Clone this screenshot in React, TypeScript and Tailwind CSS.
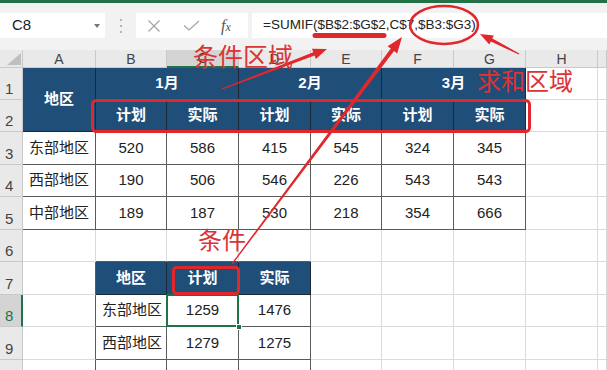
import React from "react"

const FONT = "font-['Liberation_Sans','Noto_Sans_CJK_SC',sans-serif]"

const HEAD = "bg-[#1f4e79] text-white font-bold border-r border-b border-[#1a2838] flex items-center justify-center text-[15px]"
const DATA = "border-r border-b border-[#5a5a5a] flex items-center justify-center text-[15px] text-[#222]"
const DATA_L = "border-r border-b border-[#5a5a5a] flex items-center justify-start pl-[6px] text-[15px] text-[#222]"
const BLANK = "border-r border-b border-[#dadada]"
const ROWHDR = "bg-[#e9e9e9] border-r border-b border-[#c9c9c9] flex items-end pl-[5px] pb-[3px] text-[15px] leading-none text-[#444]"
const COLHDR = "bg-[#e9e9e9] border-r border-b border-[#c9c9c9] flex items-center justify-center pt-px text-[14px] text-[#444]"

type Pt = [number, number]

// tapered red arrow, thin at the tail and thick near the head
function arrowPoints(x1: number, y1: number, x2: number, y2: number, w1: number, w2: number, hl: number, hw: number) {
    const dx = x2 - x1
    const dy = y2 - y1
    const len = Math.hypot(dx, dy)
    const ux = dx / len
    const uy = dy / len
    const nx = -uy
    const ny = ux
    const bx = x2 - ux * hl
    const by = y2 - uy * hl
    const pts: Pt[] = [
        [x1 + (nx * w1) / 2, y1 + (ny * w1) / 2],
        [bx + (nx * w2) / 2, by + (ny * w2) / 2],
        [bx + (nx * hw) / 2, by + (ny * hw) / 2],
        [x2, y2],
        [bx - (nx * hw) / 2, by - (ny * hw) / 2],
        [bx - (nx * w2) / 2, by - (ny * w2) / 2],
        [x1 - (nx * w1) / 2, y1 - (ny * w1) / 2],
    ]
    return pts.map(p => `${p[0].toFixed(1)},${p[1].toFixed(1)}`).join(" ")
}

function Annotations() {
    const red = "#e0282c"
    return (
        <>
            <svg className="absolute left-0 top-0 pointer-events-none" width={607} height={370}>
                {/* underline of the criteria range */}
                <line x1={315} y1={35.5} x2={384} y2={35.5} stroke={red} strokeWidth={5} strokeLinecap="round" />
                {/* circle round the sum range */}
                <ellipse cx={444} cy={25} rx={34} ry={19} fill="none" stroke={red} strokeWidth={2.5} />
                {/* box round B2:G2 */}
                <rect x={92.5} y={100.5} width={437} height={31} rx={4} fill="none" stroke={red} strokeWidth={3} />
                {/* box round C7 */}
                <rect x={173.5} y={267.5} width={65} height={26} rx={3} fill="none" stroke={red} strokeWidth={3} />
                <polygon points={arrowPoints(222, 89, 327, 49, 1.2, 3.5, 14, 11)} fill={red} />
                <polygon points={arrowPoints(232, 264, 402, 37, 1.2, 4, 16, 12)} fill={red} />
                <polygon points={arrowPoints(519, 54, 480, 34, 1.2, 3.5, 13, 10)} fill={red} />
            </svg>
            <span className="absolute left-[193px] top-[43px] text-[25px] leading-none text-[#db3434] font-['Noto_Sans_CJK_SC',sans-serif]">条件区域</span>
            <span className="absolute left-[477px] top-[68px] text-[24px] leading-none text-[#db3434] font-['Noto_Sans_CJK_SC',sans-serif]">求和区域</span>
            <span className="absolute left-[198px] top-[227px] text-[24px] leading-none text-[#db3434] font-['Noto_Sans_CJK_SC',sans-serif]">条件</span>
        </>
    )
}

function FormulaBar() {
    return (
        <div className="h-[47px] bg-[#f2f2f2] flex items-start pt-[10px]">
            <div className="w-[105px] h-[25px] bg-white flex items-center justify-between pl-[12px] pr-[5px]">
                <span className="text-[15px] text-[#222]">C8</span>
                <svg width="6" height="4" viewBox="0 0 6 4">
                    <path d="M0 0 L6 0 L3 4 Z" fill="#777" />
                </svg>
            </div>
            <div className="w-[31px] h-[25px] flex flex-col items-center justify-center gap-[4px]">
                <span className="w-[2px] h-[2px] bg-[#b5b5b5]" />
                <span className="w-[2px] h-[2px] bg-[#b5b5b5]" />
                <span className="w-[2px] h-[2px] bg-[#b5b5b5]" />
            </div>
            <div className="w-[112px] h-[25px] bg-white flex items-center">
                <svg className="ml-[12px]" width="12" height="12" viewBox="0 0 12 12">
                    <path d="M0.5 0.5 L11.5 11.5 M11.5 0.5 L0.5 11.5" stroke="#a6a6a6" strokeWidth="1.3" />
                </svg>
                <svg className="ml-[23px]" width="17" height="11" viewBox="0 0 17 11">
                    <path d="M1 5.5 L6 10 L16 1" fill="none" stroke="#a6a6a6" strokeWidth="1.3" />
                </svg>
                <span className="ml-[21px] italic font-['Liberation_Serif',serif] text-[16px] text-[#555] leading-none">
                    f<span className="text-[12px]">x</span>
                </span>
            </div>
            <div className="ml-[4px] flex-1 h-[25px] bg-white flex items-center pl-[11px] text-[13.5px] text-[#222]">
                =SUMIF($B$2:$G$2,C$7,$B3:$G3)
            </div>
        </div>
    )
}

function Sheet() {
    const cols = ["A", "B", "C", "D", "E", "F", "G", "H", ""]
    const table1 = [
        ["东部地区", "520", "586", "415", "545", "324", "345"],
        ["西部地区", "190", "506", "546", "226", "543", "543"],
        ["中部地区", "189", "187", "530", "218", "354", "666"],
    ]

    return (
        <div className="grid grid-cols-[23px_73px_71px_72px_72px_71px_72px_72px_72px_1fr] grid-rows-[18px_32px_32px_33px_32px_33px_32px_33px_32px_33px_32px]">
            {/* column headers */}
            <div className="bg-[#e9e9e9] border-r border-b border-[#c9c9c9] flex items-end justify-end pr-[1px] pb-[2px]">
                <svg width="14" height="12" viewBox="0 0 14 12">
                    <path d="M14 0 L14 12 L0 12 Z" fill="#bfbfbf" />
                </svg>
            </div>
            {cols.map((c, i) => (
                <div
                    key={i}
                    className={
                        c === "C"
                            ? "bg-[#d4d4d4] border-r border-[#c9c9c9] border-b-2 border-b-[#217346] flex items-center justify-center pt-px text-[14px] text-[#333]"
                            : COLHDR
                    }
                >
                    {c}
                </div>
            ))}

            {/* row 1 */}
            <div className={ROWHDR}>1</div>
            <div className={`${HEAD} row-span-2`}>地区</div>
            <div className={`${HEAD} col-span-2`}>1月</div>
            <div className={`${HEAD} col-span-2`}>2月</div>
            <div className={`${HEAD} col-span-2`}>3月</div>
            <div className={BLANK} />
            <div className={BLANK} />

            {/* row 2 */}
            <div className={ROWHDR}>2</div>
            {["计划", "实际", "计划", "实际", "计划", "实际"].map((t, i) => (
                <div key={i} className={HEAD}>{t}</div>
            ))}
            <div className={BLANK} />
            <div className={BLANK} />

            {/* rows 3-5 */}
            {table1.map((row, r) => (
                <React.Fragment key={r}>
                    <div className={ROWHDR}>{r + 3}</div>
                    {row.map((v, i) => (
                        <div key={i} className={i === 0 ? DATA_L : DATA}>{v}</div>
                    ))}
                    <div className={BLANK} />
                    <div className={BLANK} />
                </React.Fragment>
            ))}

            {/* row 6 */}
            <div className={ROWHDR}>6</div>
            <div className={BLANK} />
            <div className="border-r border-r-[#dadada] border-b border-b-[#5a5a5a]" />
            <div className="border-r border-r-[#dadada] border-b border-b-[#5a5a5a]" />
            <div className="border-r border-r-[#dadada] border-b border-b-[#5a5a5a]" />
            {[0, 1, 2, 3, 4].map(i => <div key={i} className={BLANK} />)}

            {/* row 7 */}
            <div className={ROWHDR}>7</div>
            <div className="border-r border-r-[#5a5a5a] border-b border-b-[#dadada]" />
            <div className={HEAD}>地区</div>
            <div className={HEAD}>计划</div>
            <div className={HEAD}>实际</div>
            {[0, 1, 2, 3, 4].map(i => <div key={i} className={BLANK} />)}

            {/* row 8 */}
            <div className="bg-[#d4d4d4] border-r-2 border-r-[#217346] border-b border-b-[#c9c9c9] flex items-end pl-[5px] pb-[3px] text-[15px] leading-none text-[#217346]">8</div>
            <div className="border-r border-r-[#5a5a5a] border-b border-b-[#dadada]" />
            <div className={DATA_L}>东部地区</div>
            <div className={`${DATA} relative`}>
                1259
                <div className="absolute -left-px -top-px -right-px -bottom-px border-2 border-[#217346]" />
                <div className="absolute -right-[4px] -bottom-[4px] w-[6px] h-[6px] bg-[#217346] border border-white" />
            </div>
            <div className={DATA}>1476</div>
            {[0, 1, 2, 3, 4].map(i => <div key={i} className={BLANK} />)}

            {/* row 9 */}
            <div className={ROWHDR}>9</div>
            <div className="border-r border-r-[#5a5a5a] border-b border-b-[#dadada]" />
            <div className={DATA_L}>西部地区</div>
            <div className={DATA}>1279</div>
            <div className={DATA}>1275</div>
            {[0, 1, 2, 3, 4].map(i => <div key={i} className={BLANK} />)}

            {/* row 10, cut off by the window */}
            <div className={ROWHDR} />
            <div className="border-r border-r-[#5a5a5a] border-b border-b-[#dadada]" />
            <div className={DATA} />
            <div className={DATA} />
            <div className={DATA} />
            {[0, 1, 2, 3, 4].map(i => <div key={i} className={BLANK} />)}
        </div>
    )
}

export default function App() {
    return (
        <div className={`relative w-[607px] h-[370px] overflow-hidden bg-white ${FONT}`}>
            <div className="h-[3px] bg-[#217346]" />
            <FormulaBar />
            <Sheet />
            <Annotations />
        </div>
    )
}
